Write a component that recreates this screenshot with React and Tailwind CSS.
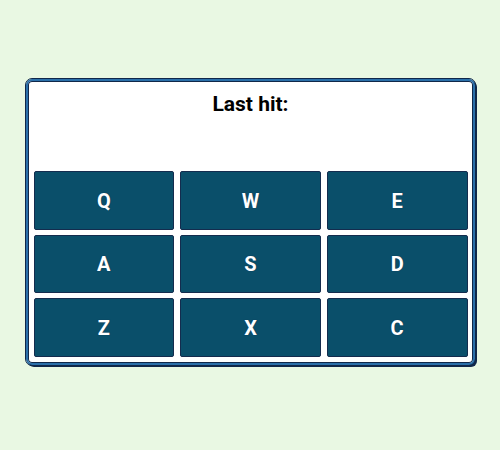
export default function App() {
  const keys = ["Q", "W", "E", "A", "S", "D", "Z", "X", "C"];
  return (
    <div className="min-h-screen w-full bg-[#e9f8e3] flex items-center justify-center pb-[6px]" style={{ fontFamily: "Roboto, 'Liberation Sans', sans-serif" }}>
      <div className="w-[449px] rounded-[6px] border-2 border-[#2b70aa] outline outline-1 outline-[#10284a] shadow-[inset_0_0_0_1px_#10284a,2px_2px_0_#10284a] bg-white pt-[6px] pb-[6px] pl-[6px] pr-[5px]">
        <div className="h-[84px] flex justify-center pt-[4px]">
          <div className="text-[21px] font-bold text-black leading-[26px]">Last hit:</div>
        </div>
        <div className="grid grid-cols-3 gap-x-[6px] gap-y-[5px]">
          {keys.map((k) => (
            <div key={k} className="h-[58.5px] rounded-[2px] bg-[#0a4f6a] border border-[#142c4e] flex items-center justify-center text-white font-bold text-[20px] [text-shadow:0_0_1px_#10284a]">
              {k}
            </div>
          ))}
        </div>
      </div>
    </div>
  );
}
